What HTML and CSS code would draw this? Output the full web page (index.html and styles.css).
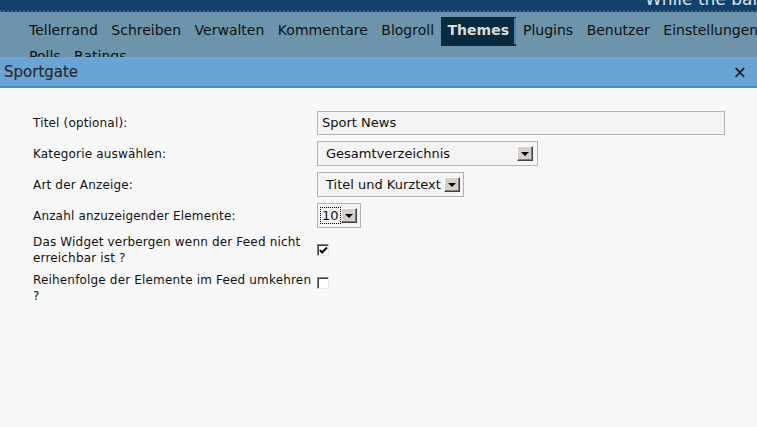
FILE: index.html
```html
<!DOCTYPE html>
<html>
<head>
<meta charset="utf-8">
<link rel="stylesheet" href="styles.css">
</head>
<body>
<div class="topbar"><span class="blogname">While the band</span></div>
<div class="menubar">
  <ul class="menu">
    <li>Tellerrand</li>
    <li>Schreiben</li>
    <li>Verwalten</li>
    <li>Kommentare</li>
    <li>Blogroll</li>
    <li class="active">Themes</li>
    <li>Plugins</li>
    <li>Benutzer</li>
    <li>Einstellungen</li>
    <li>Polls</li>
    <li>Ratings</li>
  </ul>
</div>
<div class="dialog">
  <div class="dialog-head">
    <span class="dialog-title">Sportgate</span>
    <span class="close">×</span>
  </div>
  <div class="dialog-body">
    <div class="form">
      <div class="label">Titel (optional):</div>
      <div class="field"><div class="textinput">Sport News</div></div>

      <div class="label">Kategorie auswählen:</div>
      <div class="field"><div class="select sel-wide"><span class="val">Gesamtverzeichnis</span><span class="arrow"></span></div></div>

      <div class="label">Art der Anzeige:</div>
      <div class="field"><div class="select"><span class="val">Titel und Kurztext</span><span class="arrow"></span></div></div>

      <div class="label">Anzahl anzuzeigender Elemente:</div>
      <div class="field"><div class="select sel-small"><span class="val focus">10</span><span class="arrow"></span></div></div>

      <div class="label">Das Widget verbergen wenn der Feed nicht erreichbar ist ?</div>
      <div class="field cb-field"><span class="checkbox checked"><svg width="9" height="9" viewBox="0 0 9 9"><path d="M1 4 L3 6.5 L8 1.5" fill="none" stroke="#000" stroke-width="2"/></svg></span></div>

      <div class="label">Reihenfolge der Elemente im Feed umkehren ?</div>
      <div class="field cb-field cb-low"><span class="checkbox"></span></div>
    </div>
  </div>
</div>
</body>
</html>
```
FILE: styles.css
```css
html, body {
  margin: 0;
  padding: 0;
  height: 100%;
  overflow: hidden;
  background: #f8f8f8;
  font-family: "DejaVu Sans", sans-serif;
}
.topbar {
  height: 10px;
  background: #11416b;
  position: relative;
  overflow: hidden;
  border-bottom: 2px dotted #2f6590;
}
.blogname {
  position: absolute;
  left: 645px;
  top: -11px;
  font-size: 17px;
  color: #d8e4ee;
  white-space: nowrap;
}
.menubar {
  background: #6d94aa;
  height: 45px;
  overflow: hidden;
}
.menu {
  list-style: none;
  margin: 0;
  padding: 6px 0 0 22px;
  display: flex;
  flex-wrap: wrap;
  width: 790px;
  box-sizing: border-box;
}
.menu li {
  font-size: 14px;
  color: #111;
  height: 26px;
  line-height: 24px;
  padding: 0 6.5px 0 7px;
  box-sizing: border-box;
}
.menu li.active {
  background: #0a2a3d;
  color: #dcdcdc;
  font-weight: bold;
  border-right: 2px solid #4a86b3;
  padding-right: 5px;
  box-shadow: 0 -1px 0 #0a2a3d, 0 2px 0 #0a2a3d;
}
.dialog-head {
  background: #69a4d4;
  height: 28px;
  border-bottom: 2px solid #4a8bc2;
  display: flex;
  align-items: center;
  justify-content: space-between;
  padding: 1px 10px 0 4px;
  box-sizing: content-box;
}
.dialog-title {
  font-size: 15px;
  color: #2b2b2b;
  -webkit-text-stroke: 0.2px #2b2b2b;
}
.close {
  font-size: 17px;
  color: #111;
}
.dialog-body {
  padding: 23px 32px 0 33px;
}
.form {
  display: grid;
  grid-template-columns: 281px 1fr;
  column-gap: 3px;
  row-gap: 6px;
  font-size: 12px;
  color: #111;
}
.label {
  line-height: 16px;
  align-self: center;
  letter-spacing: 0.17px;
}
.field {
  display: flex;
  align-items: center;
}
.textinput {
  flex: 1;
  height: 24px;
  box-sizing: border-box;
  border: 1px solid #b3b3b3;
  background: #f4f4f4;
  font-size: 13px;
  line-height: 22px;
  padding-left: 4px;
}
.select {
  height: 25px;
  box-sizing: border-box;
  border: 1px solid #b3b3b3;
  background: #f4f4f4;
  display: flex;
  align-items: center;
  padding: 0 3px 0 8px;
  font-size: 13px;
}
.sel-wide { width: 221px; justify-content: space-between; padding-right: 4px; }
.sel-small { padding-left: 3px; }
.val { white-space: nowrap; }
.val.focus {
  outline: 1px dotted #000;
  padding: 0 1px;
  line-height: 15px;
}
.arrow {
  width: 16px;
  height: 15px;
  box-sizing: border-box;
  background: #d4d0c8;
  border: 1px solid;
  border-color: #fff #404040 #404040 #fff;
  box-shadow: inset -1px -1px 0 #808080;
  position: relative;
  margin-left: 3px;
  flex: none;
}
.sel-small .arrow { margin-left: 1px; }
.arrow::after {
  content: "";
  position: absolute;
  left: 3px;
  top: 5px;
  border-left: 4px solid transparent;
  border-right: 4px solid transparent;
  border-top: 4px solid #000;
}
.cb-field { align-self: center; }
.cb-low { align-self: start; padding-top: 5px; }
.checkbox {
  width: 12px;
  height: 12px;
  box-sizing: border-box;
  border: 1px solid;
  border-color: #808080 #e8e8e8 #e8e8e8 #808080;
  box-shadow: inset 1px 1px 0 #404040;
  background: #fff;
  display: flex;
  align-items: center;
  justify-content: center;
}
.checkbox svg { margin: 1px 0 0 1px; }
```
